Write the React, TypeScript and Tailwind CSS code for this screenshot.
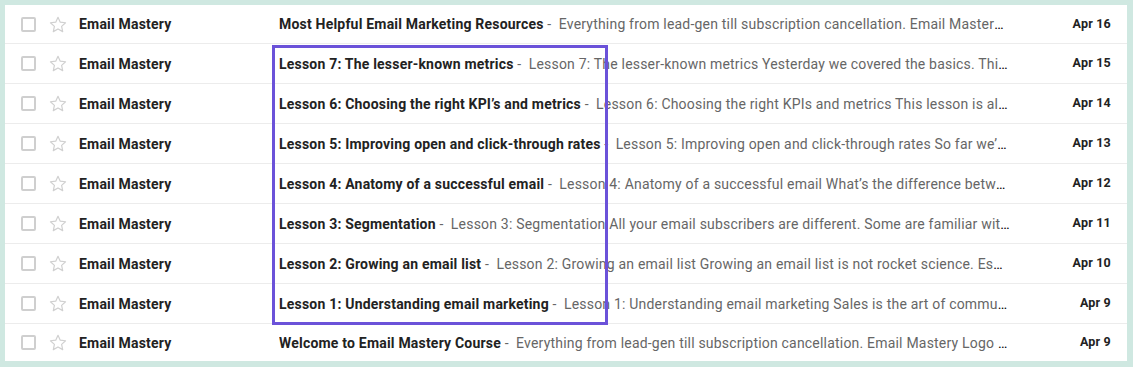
const emails = [
  {
    subject: 'Most Helpful Email Marketing Resources',
    snippet: 'Everything from lead-gen till subscription cancellation. Email Mastery Logo Most helpful resources',
    date: 'Apr 16',
  },
  {
    subject: 'Lesson 7: The lesser-known metrics',
    snippet: 'Lesson 7: The lesser-known metrics Yesterday we covered the basics. This time we look further',
    date: 'Apr 15',
  },
  {
    subject: 'Lesson 6: Choosing the right KPI’s and metrics',
    snippet: 'Lesson 6: Choosing the right KPIs and metrics This lesson is all about measuring',
    date: 'Apr 14',
  },
  {
    subject: 'Lesson 5: Improving open and click-through rates',
    snippet: 'Lesson 5: Improving open and click-through rates So far we’ve covered a lot',
    date: 'Apr 13',
  },
  {
    subject: 'Lesson 4: Anatomy of a successful email',
    snippet: 'Lesson 4: Anatomy of a successful email What’s the difference between good and great',
    date: 'Apr 12',
  },
  {
    subject: 'Lesson 3: Segmentation',
    snippet: 'Lesson 3: Segmentation All your email subscribers are different. Some are familiar with your brand',
    date: 'Apr 11',
  },
  {
    subject: 'Lesson 2: Growing an email list',
    snippet: 'Lesson 2: Growing an email list Growing an email list is not rocket science. Essentially it is',
    date: 'Apr 10',
  },
  {
    subject: 'Lesson 1: Understanding email marketing',
    snippet: 'Lesson 1: Understanding email marketing Sales is the art of communicating value',
    date: 'Apr 9',
  },
  {
    subject: 'Welcome to Email Mastery Course',
    snippet: 'Everything from lead-gen till subscription cancellation. Email Mastery Logo Welcome aboard',
    date: 'Apr 9',
  },
]

function StarIcon() {
  return (
    <svg width="18" height="17" viewBox="0 0 24 23" fill="none" stroke="#d0d0d0" strokeWidth="1.6" strokeLinejoin="round" aria-hidden>
      <path d="M12 1.8l3.05 6.6 7.2.78-5.38 4.86 1.5 7.1L12 17.5l-6.37 3.64 1.5-7.1L1.75 9.18l7.2-.78z" />
    </svg>
  )
}

function EmailRow({ subject, snippet, date, index, last }: { subject: string; snippet: string; date: string; index: number; last: boolean }) {
  const height = index === 0 || last ? 'h-[38px]' : 'h-10'
  return (
    <div className={`flex items-center tracking-[0.2px] ${height} ${index > 0 ? 'border-t border-[#ececec]' : ''}`}>
      <div className="ml-4 h-[15px] w-[15px] shrink-0 rounded-[2px] border-2 border-[#cfcfcf]" />
      <div className="ml-[13px] flex w-[18px] shrink-0 items-center">
        <StarIcon />
      </div>
      <span className="ml-3 w-[200px] shrink-0 text-sm font-bold text-[#222222]">Email Mastery</span>
      <div className="min-w-0 flex-1 truncate text-sm">
        <span className="font-bold text-[#222222]">{subject}</span>
        <span className="text-[#666666]"> - &nbsp;{snippet}</span>
      </div>
      <span className="w-[117px] shrink-0 pr-4 text-right text-[12.5px] font-bold text-[#222222]">{date}</span>
    </div>
  )
}

export default function App() {
  return (
    <div className="h-[367px] w-[1133px] bg-[#cfe8e1] pl-[5px] pr-[6px] pt-[5px]" style={{ fontFamily: 'Roboto, "Noto Sans", sans-serif' }}>
      <div className="relative bg-white">
        {emails.map((email, i) => (
          <EmailRow key={i} index={i} last={i === emails.length - 1} {...email} />
        ))}
        {/* highlight around lesson subjects */}
        <div className="pointer-events-none absolute left-[267px] top-[40px] h-[280px] w-[336px] border-[3px] border-[#6b52d9]" />
      </div>
    </div>
  )
}
